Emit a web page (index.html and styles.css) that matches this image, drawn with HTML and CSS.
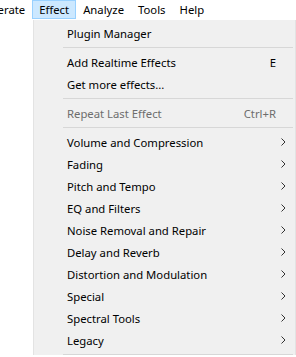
FILE: index.html
```html
<!DOCTYPE html>
<html lang="en">
<head>
    <meta charset="UTF-8">
    <meta name="viewport" content="width=device-width, initial-scale=1.0">
    <title>Effect Menu</title>
    <link rel="stylesheet" href="styles.css">
</head>
<body>
    <div class="menubar">
        <div class="bar-item first">Generate</div>
        <div class="bar-item open">Effect</div>
        <div class="bar-item">Analyze</div>
        <div class="bar-item">Tools</div>
        <div class="bar-item">Help</div>
    </div>

    <div class="menu">
        <div class="item"><span class="label">Plugin Manager</span></div>
        <div class="sep"></div>
        <div class="item"><span class="label">Add Realtime Effects</span><span class="key">E</span></div>
        <div class="item"><span class="label">Get more effects...</span></div>
        <div class="sep"></div>
        <div class="item disabled"><span class="label">Repeat Last Effect</span><span class="key">Ctrl+R</span></div>
        <div class="sep"></div>
        <div class="item sub"><span class="label">Volume and Compression</span><svg class="arrow" viewBox="0 0 5 8"><path d="M0.5 0.5 L4 4 L0.5 7.5"/></svg></div>
        <div class="item sub"><span class="label">Fading</span><svg class="arrow" viewBox="0 0 5 8"><path d="M0.5 0.5 L4 4 L0.5 7.5"/></svg></div>
        <div class="item sub"><span class="label">Pitch and Tempo</span><svg class="arrow" viewBox="0 0 5 8"><path d="M0.5 0.5 L4 4 L0.5 7.5"/></svg></div>
        <div class="item sub"><span class="label">EQ and Filters</span><svg class="arrow" viewBox="0 0 5 8"><path d="M0.5 0.5 L4 4 L0.5 7.5"/></svg></div>
        <div class="item sub"><span class="label">Noise Removal and Repair</span><svg class="arrow" viewBox="0 0 5 8"><path d="M0.5 0.5 L4 4 L0.5 7.5"/></svg></div>
        <div class="item sub"><span class="label">Delay and Reverb</span><svg class="arrow" viewBox="0 0 5 8"><path d="M0.5 0.5 L4 4 L0.5 7.5"/></svg></div>
        <div class="item sub"><span class="label">Distortion and Modulation</span><svg class="arrow" viewBox="0 0 5 8"><path d="M0.5 0.5 L4 4 L0.5 7.5"/></svg></div>
        <div class="item sub"><span class="label">Special</span><svg class="arrow" viewBox="0 0 5 8"><path d="M0.5 0.5 L4 4 L0.5 7.5"/></svg></div>
        <div class="item sub"><span class="label">Spectral Tools</span><svg class="arrow" viewBox="0 0 5 8"><path d="M0.5 0.5 L4 4 L0.5 7.5"/></svg></div>
        <div class="item sub"><span class="label">Legacy</span><svg class="arrow" viewBox="0 0 5 8"><path d="M0.5 0.5 L4 4 L0.5 7.5"/></svg></div>
        <div class="sep"></div>
    </div>
</body>
</html>
```

FILE: styles.css
```css
* {
    margin: 0;
    padding: 0;
    box-sizing: border-box;
}

html, body {
    height: 100%;
    overflow: hidden;
}

body {
    background: #ffffff;
    font-family: "Noto Sans", "Open Sans", sans-serif;
    font-size: 11.3px;
    color: #000000;
}

/* top menu bar, "Generate" is clipped by the window edge */
.menubar {
    display: flex;
    height: 20px;
    margin-left: -25px;
}

.bar-item {
    height: 19px;
    line-height: 17px;
    padding: 0 6px;
    border: 1px solid transparent;
    white-space: nowrap;
}

.bar-item.first {
    padding-left: 0;
}

.bar-item.open {
    background: #cce8ff;
    border-color: #99d1ff;
}

.menu {
    margin-left: 33px;
    width: 263px;
    background: #f0f0f0;
    border-left: 1px solid #e3e3e3;
    border-right: 1px solid #e3e3e3;
    padding-top: 2px;
}

.item {
    display: flex;
    align-items: center;
    height: 22px;
    padding-left: 33px;
    padding-right: 19px;
    white-space: nowrap;
}

.label {
    flex: 1;
}

.key {
    text-align: right;
}

.item.disabled {
    color: #6d6d6d;
}

.item.sub {
    padding-right: 9px;
}

.arrow {
    width: 5px;
    height: 8px;
    fill: none;
    stroke: #333333;
    stroke-width: 1;
}

.sep {
    height: 1px;
    margin: 3px 2px 3px 29px;
    background: #d7d7d7;
}
```
